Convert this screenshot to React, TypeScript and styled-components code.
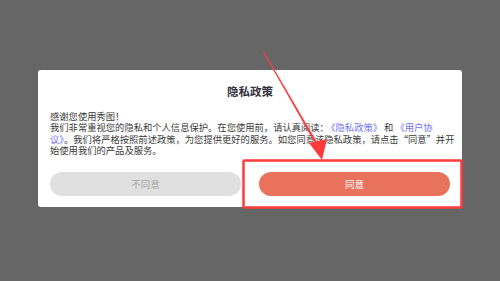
import React from "react";
import styled, { createGlobalStyle } from "styled-components";

const GlobalStyle = createGlobalStyle`
  html, body {
    margin: 0;
    padding: 0;
    background: #666666;
  }
  body {
    font-family: "Noto Sans CJK SC", "Noto Sans", sans-serif;
  }
`;

const Screen = styled.div`
  position: relative;
  width: 500px;
  height: 281px;
  background: #666666;
  display: flex;
  flex-direction: column;
  align-items: center;
  padding-top: 70px;
  box-sizing: border-box;
  overflow: hidden;
`;

const Dialog = styled.div`
  width: 424px;
  box-sizing: border-box;
  background: #ffffff;
  border-radius: 3px;
  padding: 13px 12px 11px;
  display: flex;
  flex-direction: column;
`;

const Title = styled.h2`
  margin: 0;
  font-size: 11.5px;
  line-height: 17px;
  font-weight: 700;
  color: #33333f;
  text-align: center;
`;

const Body = styled.div`
  margin: 11px 0 0;
  font-size: 9.3px;
  line-height: 11.3px;
  color: #3a3a3a;
`;

const Line = styled.div`
  white-space: nowrap;
`;

const Link = styled.span<{ $gap?: boolean }>`
  color: #7474f2;
  margin: ${(p) => (p.$gap ? "0 2px" : "0")};
`;

const Buttons = styled.div`
  display: flex;
  gap: 18px;
  margin-top: 16px;
`;

const Button = styled.button<{ $primary?: boolean }>`
  flex: 1;
  height: 24px;
  border: none;
  border-radius: 12px;
  font-family: inherit;
  font-size: 9.5px;
  background: ${(p) => (p.$primary ? "#e9725c" : "#e0e0e0")};
  color: ${(p) => (p.$primary ? "#ffffff" : "#a8a8a8")};
  cursor: pointer;
`;

const Annotation = styled.svg`
  position: absolute;
  left: 0;
  top: 0;
  pointer-events: none;
`;

const PrivacyDialog = () => (
  <Dialog>
    <Title>隐私政策</Title>
    <Body>
      <Line>感谢您使用秀图！</Line>
      <Line>
        我们非常重视您的隐私和个人信息保护。在您使用前，请认真阅读：
        <Link $gap>《隐私政策》</Link>和<Link $gap>《用户协</Link>
      </Line>
      <Line>
        <Link>议》</Link>。我们将严格按照前述政策，为您提供更好的服务。如您同意该隐私政策，请点击“同意”并开
      </Line>
      <Line>始使用我们的产品及服务。</Line>
    </Body>
    <Buttons>
      <Button>不同意</Button>
      <Button $primary>同意</Button>
    </Buttons>
  </Dialog>
);

export default function App() {
  return (
    <>
      <GlobalStyle />
      <Screen>
        <PrivacyDialog />
        <Annotation width="500" height="281" viewBox="0 0 500 281">
          <rect x="243.5" y="160.5" width="218" height="47" fill="none" stroke="#ff3b3b" strokeWidth="2.5" rx="1" />
          <polygon points="263,52 264,51.6 318,144 316,145" fill="#ff3b3b" />
          <polygon points="309,143 327,139 322,160" fill="#ff3b3b" />
        </Annotation>
      </Screen>
    </>
  );
}
